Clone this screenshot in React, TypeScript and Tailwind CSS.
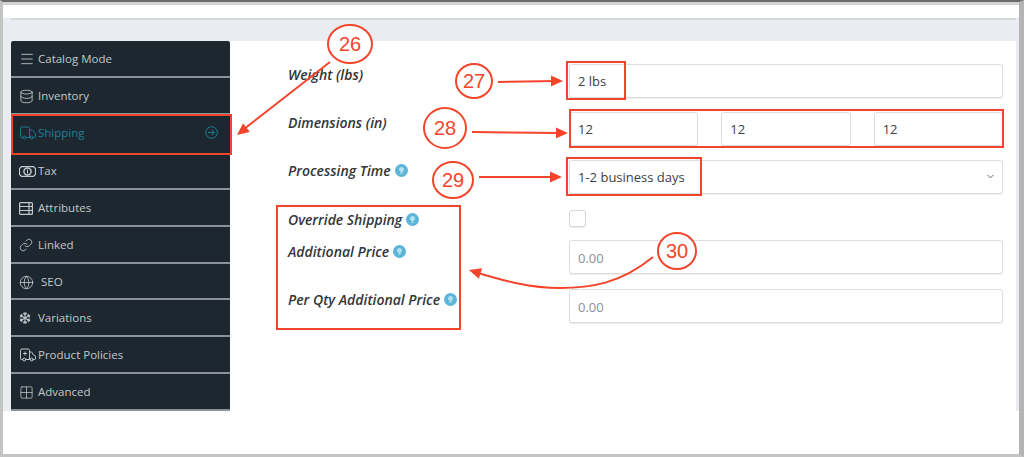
import type { ReactNode } from "react";
import { Ambulance, ChevronDown, Database, Globe, Grid2x2, Link, Menu, Truck } from "lucide-react";
import { FaRegSnowflake } from "react-icons/fa";

function RowsIcon() {
  return (
    <svg width="14" height="13" viewBox="0 0 14 13" fill="none" stroke="currentColor" strokeWidth="1.2">
      <rect x="0.6" y="0.6" width="12.8" height="11.8" rx="1" />
      <path d="M0.5 4.5h13M0.5 8.5h13M10 0.5v12" />
    </svg>
  );
}

function CashIcon() {
  return (
    <svg width="17" height="11" viewBox="0 0 17 11" fill="none" stroke="currentColor" strokeWidth="1.2">
      <path d="M2.5 0.6h12l2 2v5.8l-2 2h-12l-2-2V2.6z" />
      <ellipse cx="8.5" cy="5.5" rx="3.6" ry="3.4" strokeWidth="1.5" />
      <path d="M8.5 3.5v4" strokeWidth="1" />
    </svg>
  );
}

function GoIcon() {
  return (
    <svg width="13" height="13" viewBox="0 0 13 13" fill="none" stroke="currentColor" strokeWidth="1">
      <circle cx="6.5" cy="6.5" r="5.8" />
      <path d="M2.8 6.5h6.4M6.6 3.8l2.8 2.7-2.8 2.7" />
    </svg>
  );
}

const menu: { label: string; icon: ReactNode; gap?: string; row?: string }[] = [
  { label: "Catalog Mode", icon: <Menu size={16} strokeWidth={1.3} /> },
  { label: "Inventory", icon: <Database size={15} strokeWidth={1.4} /> },
  {
    label: "Shipping",
    icon: <Truck size={18} strokeWidth={1.2} />,
    row: "h-[38px] border-b-transparent pb-px text-[#1c7f97]",
  },
  { label: "Tax", icon: <CashIcon /> },
  { label: "Attributes", icon: <RowsIcon /> },
  { label: "Linked", icon: <Link size={14} strokeWidth={1.4} /> },
  { label: "SEO", icon: <Globe size={15} strokeWidth={1.3} />, gap: "w-[22px]", row: "h-[36px] pt-[2px]" },
  { label: "Variations", icon: <FaRegSnowflake size={12} /> },
  { label: "Product Policies", icon: <Ambulance size={18} strokeWidth={1.3} /> },
  { label: "Advanced", icon: <Grid2x2 size={15} strokeWidth={1.2} /> },
];

function SideItem({ label, icon, gap, row }: { label: string; icon: ReactNode; gap?: string; row?: string }) {
  return (
    <div
      className={`flex items-center border-b-2 border-[#8b9299] pl-[8px] pr-[12px] text-[11.5px] ${
        row ?? "h-[37px] pt-px"
      } ${label === "Shipping" ? "" : "text-[#c3c8cb]"}`}
    >
      <span className={`flex shrink-0 items-center ${gap ?? "w-[19px]"}`}>{icon}</span>
      <span className="flex-1">{label}</span>
      {label === "Shipping" && <GoIcon />}
    </div>
  );
}

function Hint() {
  return (
    <span className="ml-[4px] inline-flex h-[13px] w-[13px] shrink-0 items-center justify-center rounded-full bg-[#5cb5d8]">
      <svg width="5" height="7" viewBox="0 0 5 7" fill="#b5e1f1">
        <path d="M2.5 0a2.5 2.5 0 0 1 1.3 4.6V5.4H1.2V4.6A2.5 2.5 0 0 1 2.5 0zM1.5 6h2v1h-2z" />
      </svg>
    </span>
  );
}

function Label({ children, hint }: { children: string; hint?: boolean }) {
  return (
    <div className="flex items-center text-[14px] font-semibold italic leading-[17px] text-[#33363a]">
      {children}
      {hint && <Hint />}
    </div>
  );
}

function Field({ value, placeholder, className }: { value?: string; placeholder?: boolean; className?: string }) {
  return (
    <div
      className={`flex h-[34px] items-center rounded-[3px] border border-[#dcdde0] bg-white pl-[8px] text-[13px] shadow-[0_1px_1px_rgba(0,0,0,0.08)] ${
        placeholder ? "pt-[3px] text-[#8d9094]" : "pt-px text-[#3c4043]"
      } ${className ?? ""}`}
    >
      {value}
    </div>
  );
}

// red callouts drawn on top of the screenshot
function Callouts() {
  const red = "#f4452c";
  const head = (x: number, y: number, angle: number) => (
    <polygon points="0,0 -12,-5.5 -12,5.5" fill={red} transform={`translate(${x} ${y}) rotate(${angle})`} />
  );
  const badge = (cx: number, cy: number, rx: number, ry: number, text: string) => (
    <g>
      <ellipse cx={cx} cy={cy} rx={rx} ry={ry} fill="white" stroke={red} strokeWidth="2" />
      <text x={cx} y={cy + 7} textAnchor="middle" fontSize="20" fill={red} fontFamily="'Liberation Sans', sans-serif">
        {text}
      </text>
    </g>
  );
  return (
    <svg className="pointer-events-none absolute left-[-3px] top-[-2px]" width="1024" height="457" fill="none">
      <g stroke={red} strokeWidth="2">
        <rect x="12" y="115" width="219" height="39" />
        <rect x="567" y="62" width="58" height="37" />
        <rect x="570" y="110" width="433" height="37" />
        <rect x="567" y="158" width="134" height="37" />
        <rect x="277" y="206" width="183" height="123" />
      </g>
      <g stroke={red} strokeWidth="2">
        <path d="M330 62L244 129" />
        <path d="M498 82L556 81" />
        <path d="M472 132L560 133" />
        <path d="M479 177L555 177" />
        <path d="M653 257C620 284 590 288 560 288C530 288 505 281 478 273" />
      </g>
      {head(237, 135, 142)}
      {head(563, 81, 0)}
      {head(568, 133, 0)}
      {head(562, 177, 0)}
      {head(469, 270, 197)}
      {badge(350, 44, 22, 19, "26")}
      {badge(474, 81, 18, 17, "27")}
      {badge(445, 128, 21, 20, "28")}
      {badge(453, 180, 20, 18, "29")}
      {badge(677, 251, 19, 18, "30")}
    </svg>
  );
}

export default function App() {
  return (
    <div className="relative flex h-[457px] w-[1024px] flex-col overflow-hidden border-b-[3px] border-l-[3px] border-r-[5px] border-t-2 border-b-[#c4c4c4] border-l-[#c4c4c4] border-r-[#b4b4b4] border-t-[#6a6a6a] bg-white font-['Open_Sans',sans-serif]">
      <div className="h-[3px] bg-[#d2d2d2]" />
      <div className="h-[36px] bg-[#e9ecf1]">
        <div className="h-[13px] bg-white" />
        <div className="ml-[8px] mr-[3px] h-[2px] bg-[#d6d8dc]" />
      </div>
      <div className="flex h-[370px]">
        <div className="w-[8px] bg-[#e9ecf1]" />
        <aside className="w-[219px] overflow-hidden rounded-t-[2px] bg-[#1d2730]">
          {menu.map((item) => (
            <SideItem key={item.label} {...item} />
          ))}
        </aside>
        <main className="grid flex-1 grid-cols-[281px_434px] content-start pl-[58px] pt-[23px]">
          <div className="pt-[2px]">
            <Label>Weight (lbs)</Label>
          </div>
          <Field value="2 lbs" />

          <div className="mt-[14px] pt-[2px]">
            <Label>Dimensions (in)</Label>
          </div>
          <div className="mt-[14px] grid grid-cols-3 gap-x-[23px]">
            <Field value="12" />
            <Field value="12" />
            <Field value="12" />
          </div>

          <div className="mt-[14px] pt-[2px]">
            <Label hint>Processing Time</Label>
          </div>
          <div className="relative mt-[14px]">
            <Field value="1-2 business days" />
            <ChevronDown size={11} className="absolute right-[7px] top-[11px] text-[#55595d]" />
          </div>

          <div className="mt-[17px]">
            <Label hint>Override Shipping</Label>
          </div>
          <div className="mt-[16px] h-[17px] w-[17px] rounded-[3px] border border-[#d5d6d9] bg-white shadow-[0_1px_1px_rgba(0,0,0,0.08)]" />

          <div className="mt-[12px] pt-[3px]">
            <Label hint>Additional Price</Label>
          </div>
          <Field value="0.00" placeholder className="mt-[12px]" />

          <div className="mt-[15px] pt-[2px]">
            <Label hint>Per Qty Additional Price</Label>
          </div>
          <Field value="0.00" placeholder className="mt-[15px]" />
        </main>
        <div className="w-[3px] bg-[#e9ecf1]" />
      </div>
      <Callouts />
    </div>
  );
}
